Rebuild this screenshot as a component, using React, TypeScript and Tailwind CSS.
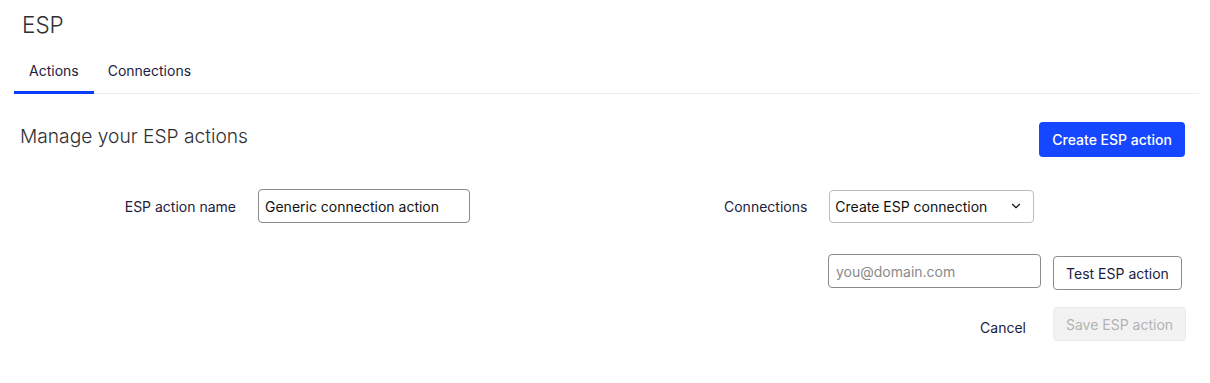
import { ChevronDown } from "lucide-react";

export default function App() {
  return (
    <div className="w-[1210px] h-[383px] bg-white font-['Inter',sans-serif] text-[#1c2140]">
      {/* Title */}
      <div className="pt-[9px] pl-[22px]">
        <h1 className="text-[22.5px] leading-[32px] font-light text-[#2f2f33]">ESP</h1>
      </div>

      {/* Tabs */}
      <div className="mt-[9px] ml-[14px] mr-[11px] flex border-b border-[#ececec]">
        <button className="px-[15px] pt-[11px] pb-[10px] text-[14px] leading-[20px] border-b-[3px] border-[#0a3cff] -mb-px">
          Actions
        </button>
        <button className="px-[14px] pt-[11px] pb-[10px] text-[14px] leading-[20px] border-b-[3px] border-transparent -mb-px">
          Connections
        </button>
      </div>

      {/* Header */}
      <div className="mt-[28px] pl-[20px] pr-[25px] flex items-start justify-between">
        <h2 className="text-[19.2px] leading-[28px] font-light text-[#2f2f33]">Manage your ESP actions</h2>
        <button className="h-[35px] px-[13px] rounded-[4px] bg-[#1447ff] text-white text-[14px] font-medium">
          Create ESP action
        </button>
      </div>

      {/* Form row */}
      <div className="mt-[32px] pl-[20px] flex items-center">
        <label className="w-[216px] text-right text-[14px]">ESP action name</label>
        <input
          defaultValue="Generic connection action"
          className="ml-[22px] w-[212px] h-[34px] px-[6px] rounded-[4px] border border-[#8a8a8a] text-[14px] text-[#111] outline-none"
        />
        <label className="ml-[254px] text-[14px]">Connections</label>
        <div className="ml-[22px] w-[205px] h-[33px] px-[5px] rounded-[4px] border border-[#bdbdbd] flex items-center justify-between text-[14px] text-[#111]">
          <span>Create ESP connection</span>
          <ChevronDown size={14} strokeWidth={2} className="mr-[5px]" />
        </div>
      </div>

      {/* Test row */}
      <div className="mt-[31px] pr-[28px] flex items-start justify-end gap-[12px]">
        <input
          placeholder="you@domain.com"
          className="w-[213px] h-[34px] px-[7px] rounded-[4px] border border-[#8a8a8a] text-[14px] placeholder:text-[#8a8a8a] outline-none"
        />
        <button className="mt-[2px] w-[129px] h-[34px] rounded-[4px] border border-[#8a8a8a] text-[14px] bg-white">
          Test ESP action
        </button>
      </div>

      {/* Actions row */}
      <div className="mt-[17px] pr-[24px] flex items-center justify-end gap-[27px]">
        <button className="mt-[6px] text-[14px]">Cancel</button>
        <button disabled className="w-[133px] h-[34px] rounded-[4px] border border-[#ebebeb] bg-[#f2f2f2] text-[14px] text-[#b3b3b3]">
          Save ESP action
        </button>
      </div>
    </div>
  );
}
